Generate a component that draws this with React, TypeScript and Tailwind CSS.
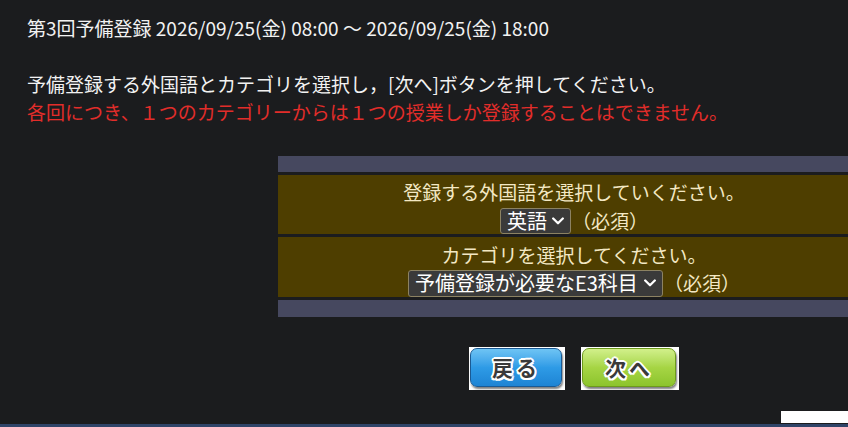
import React from "react";

const Chevron = () => (
  <svg width="12" height="8" viewBox="0 0 12 8" fill="none">
    <polyline points="1.2,1.5 6,6.2 10.8,1.5" stroke="#ffffff" strokeWidth="2.3" strokeLinecap="round" strokeLinejoin="round" />
  </svg>
);

const FakeSelect = ({ label, w, h }: { label: string; w: string; h: string }) => (
  <div
    className={`${w} ${h} flex items-center justify-between rounded-[3px] border border-[#8c8262] bg-[#3a3a3a] pl-[6px] pr-[6px] text-[20px] text-white`}
  >
    <span className="leading-none">{label}</span>
    <Chevron />
  </div>
);

const outline =
  "[text-shadow:-1.5px_-1.5px_0_#fff,1.5px_-1.5px_0_#fff,-1.5px_1.5px_0_#fff,1.5px_1.5px_0_#fff,0_-2px_0_#fff,0_2px_0_#fff,-2px_0_0_#fff,2px_0_0_#fff]";

export default function App() {
  return (
    <div className="flex h-[427px] w-[848px] flex-col overflow-hidden bg-[#1b1c1e] font-['Noto_Sans_CJK_JP',sans-serif] text-[19px] leading-[28px]">
      <div className="px-[27px] pt-[14px] text-[#f2f2f2]">
        <div>第3回予備登録 2026/09/25(金) 08:00 〜 2026/09/25(金) 18:00</div>
        <div className="h-[28px]" />
        <div>予備登録する外国語とカテゴリを選択し，[次へ]ボタンを押してください。</div>
        <div className="text-[#e22d2a]">各回につき、１つのカテゴリーからは１つの授業しか登録することはできません。</div>
      </div>

      <div className="ml-[278px] mt-[30px] flex w-[592px] shrink-0 flex-col gap-[3px]">
        <div className="h-[16px] bg-[#46485f]" />
        <div className="flex h-[59px] flex-col items-center bg-[#4e3e00] pt-[3px] text-[#f3e8c4]">
          <div className="h-[28px]">登録する外国語を選択していください。</div>
          <div className="mt-[1px] flex items-center gap-[1px]">
            <FakeSelect label="英語" w="w-[71px]" h="h-[26px]" />
            <span>（必須）</span>
          </div>
        </div>
        <div className="flex h-[60px] flex-col items-center bg-[#4e3e00] pt-[4px] text-[#f3e8c4]">
          <div className="h-[28px]">カテゴリを選択してください。</div>
          <div className="flex items-center gap-[1px]">
            <FakeSelect label="予備登録が必要なE3科目" w="w-[255px]" h="h-[27px]" />
            <span>（必須）</span>
          </div>
        </div>
        <div className="h-[17px] bg-[#46485f]" />
      </div>

      <div className="ml-[278px] mt-[30px] flex w-[592px] shrink-0 justify-center gap-[16px]">
        <div className="flex h-[43px] w-[96px] bg-white pb-[3px] pl-[1px] pr-[3px] pt-[1px]">
          <div className="flex flex-1 items-center justify-center rounded-[7px] border border-[#1b5a94] bg-gradient-to-b from-[#6ec4f4] via-[#2e9be6] to-[#1e84d4] shadow-[1px_2px_2px_rgba(0,0,0,0.5)]">
            <span className={`text-[21px] font-bold leading-none tracking-[3px] text-[#3a3a3a] ${outline}`}>戻る</span>
          </div>
        </div>
        <div className="flex h-[43px] w-[98px] bg-white pb-[3px] pl-[1px] pr-[3px] pt-[1px]">
          <div className="flex flex-1 items-center justify-center rounded-[7px] border border-[#6d9a1c] bg-gradient-to-b from-[#d2f08a] via-[#a6d544] to-[#8cc42c] shadow-[1px_2px_2px_rgba(0,0,0,0.5)]">
            <span className={`text-[21px] font-bold leading-none tracking-[3px] text-[#3a3a3a] ${outline}`}>次へ</span>
          </div>
        </div>
      </div>

      <div className="mt-auto flex justify-end">
        <div className="h-[12px] w-[67px] bg-white" />
      </div>
      <div className="mt-[1px] h-[3px] shrink-0 bg-[#2f4468]" />
    </div>
  );
}
